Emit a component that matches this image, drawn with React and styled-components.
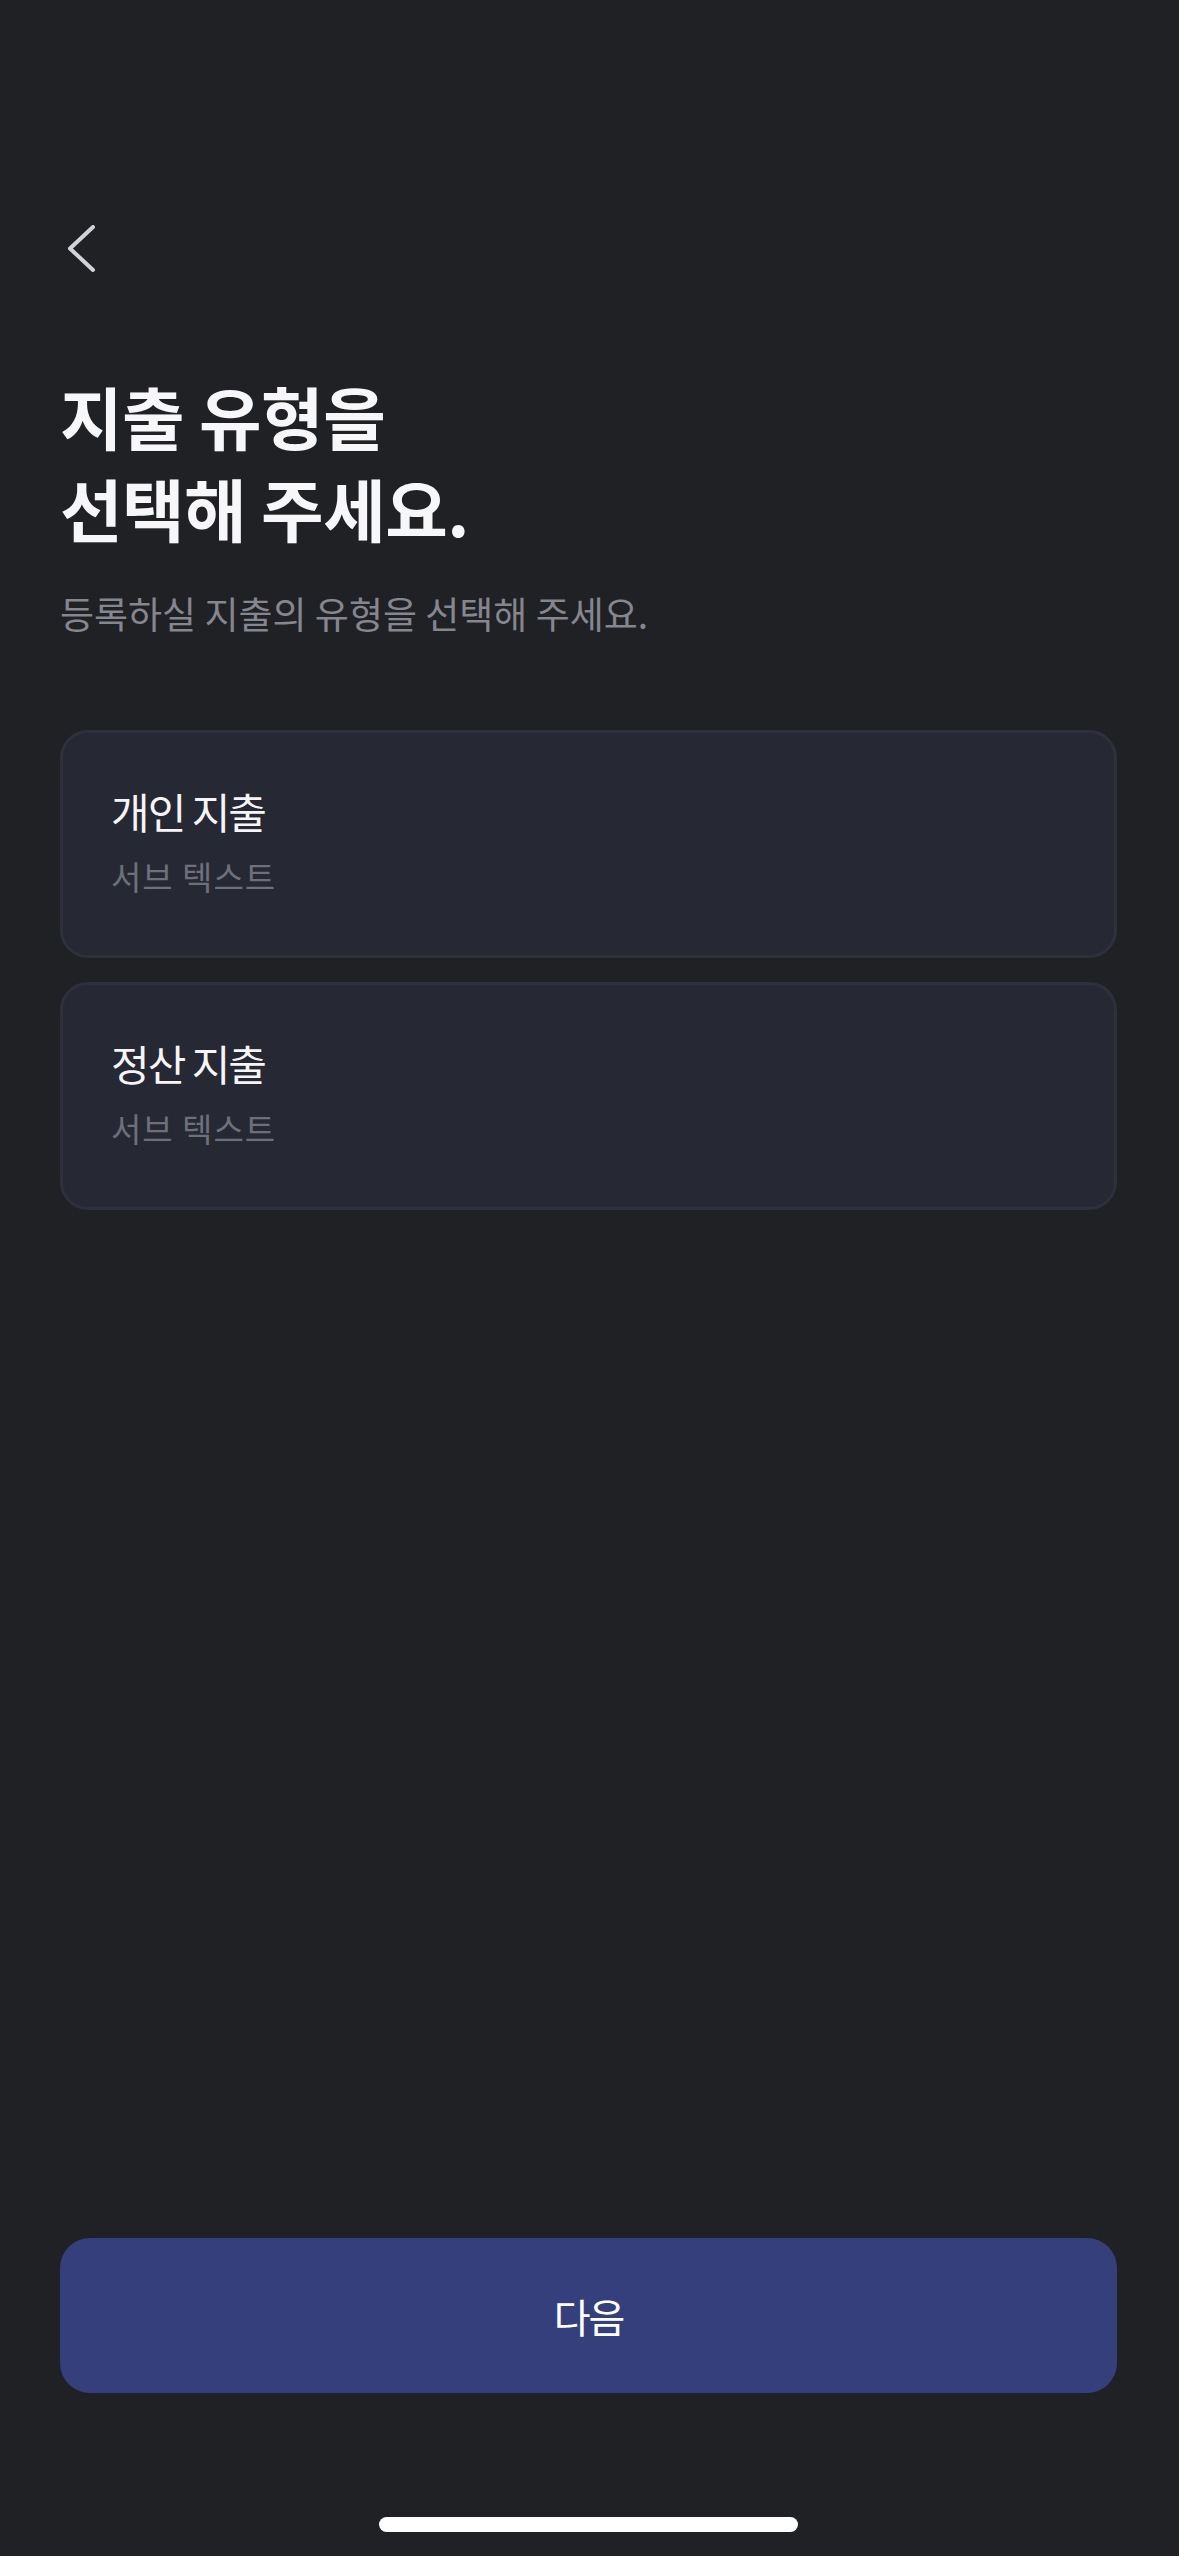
import React from "react";
import styled, { createGlobalStyle } from "styled-components";

const GlobalStyle = createGlobalStyle`
  * { box-sizing: border-box; }
  html, body {
    margin: 0;
    padding: 0;
    background: #202125;
  }
  body {
    font-family: "Noto Sans CJK KR", "Noto Sans", sans-serif;
    color: #f5f5f7;
  }
`;

const options = [
  { id: "personal", title: "개인 지출", sub: "서브 텍스트" },
  { id: "settle", title: "정산 지출", sub: "서브 텍스트" },
];

const App = () => {
  return (
    <Screen>
      <GlobalStyle />
      <Header>
        <BackButton aria-label="뒤로">
          <svg width="32" height="50" viewBox="0 0 32 50" fill="none">
            <polyline
              points="27,2 4,23.5 27,45"
              stroke="#d2d3d9"
              strokeWidth="4"
              strokeLinecap="round"
              strokeLinejoin="round"
            />
          </svg>
        </BackButton>
      </Header>

      <Title>
        지출 유형을
        <br />
        선택해 주세요.
      </Title>
      <Subtitle>등록하실 지출의 유형을 선택해 주세요.</Subtitle>

      <OptionList>
        {options.map((o) => (
          <OptionCard key={o.id}>
            <OptionTitle>{o.title}</OptionTitle>
            <OptionSub>{o.sub}</OptionSub>
          </OptionCard>
        ))}
      </OptionList>

      <Spacer />

      <NextButton>다음</NextButton>
      <HomeIndicator />
    </Screen>
  );
};

const Screen = styled.div`
  min-height: 2556px;
  display: flex;
  flex-direction: column;
  padding: 0 62px 24px 60px;
  background: #202125;
`;

const Header = styled.header`
  padding-top: 225px;
  height: 275px;
  display: flex;
  align-items: flex-start;
`;

const BackButton = styled.button`
  background: none;
  border: 0;
  padding: 0;
  margin-left: 6px;
  width: 32px;
  height: 50px;
  display: block;
  cursor: pointer;
  svg { display: block; }
`;

const Title = styled.h1`
  margin: 95px 0 0;
  font-size: 68px;
  line-height: 92px;
  font-weight: 700;
  letter-spacing: -0.5px;
  color: #f7f7f9;
`;

const Subtitle = styled.p`
  margin: 34px 0 0;
  font-size: 37px;
  line-height: 50px;
  font-weight: 400;
  letter-spacing: 0;
  color: #85868e;
`;

const OptionList = styled.div`
  margin-top: 92px;
  display: flex;
  flex-direction: column;
  gap: 24px;
`;

const OptionCard = styled.div`
  height: 228px;
  padding: 50px 48px 0;
  background: #262833;
  border: 3px solid #2e303b;
  border-radius: 28px;
  display: flex;
  flex-direction: column;
  gap: 15px;
  cursor: pointer;
`;

const OptionTitle = styled.div`
  font-size: 42px;
  line-height: 56px;
  font-weight: 400;
  letter-spacing: -2px;
  color: #f5f5f7;
`;

const OptionSub = styled.div`
  font-size: 33px;
  line-height: 44px;
  font-weight: 400;
  letter-spacing: 1px;
  color: #6d6f7a;
`;

const Spacer = styled.div`
  flex: 1;
`;

const NextButton = styled.button`
  height: 155px;
  width: 100%;
  border: 0;
  border-radius: 30px;
  background: #343f7c;
  color: #ffffff;
  font-family: "Noto Sans CJK KR", "Noto Sans", sans-serif;
  font-size: 40px;
  font-weight: 400;
  letter-spacing: -2px;
  cursor: pointer;
`;

const HomeIndicator = styled.div`
  align-self: center;
  margin-top: 124px;
  width: 419px;
  height: 15px;
  border-radius: 8px;
  background: #ffffff;
`;

export default App;
